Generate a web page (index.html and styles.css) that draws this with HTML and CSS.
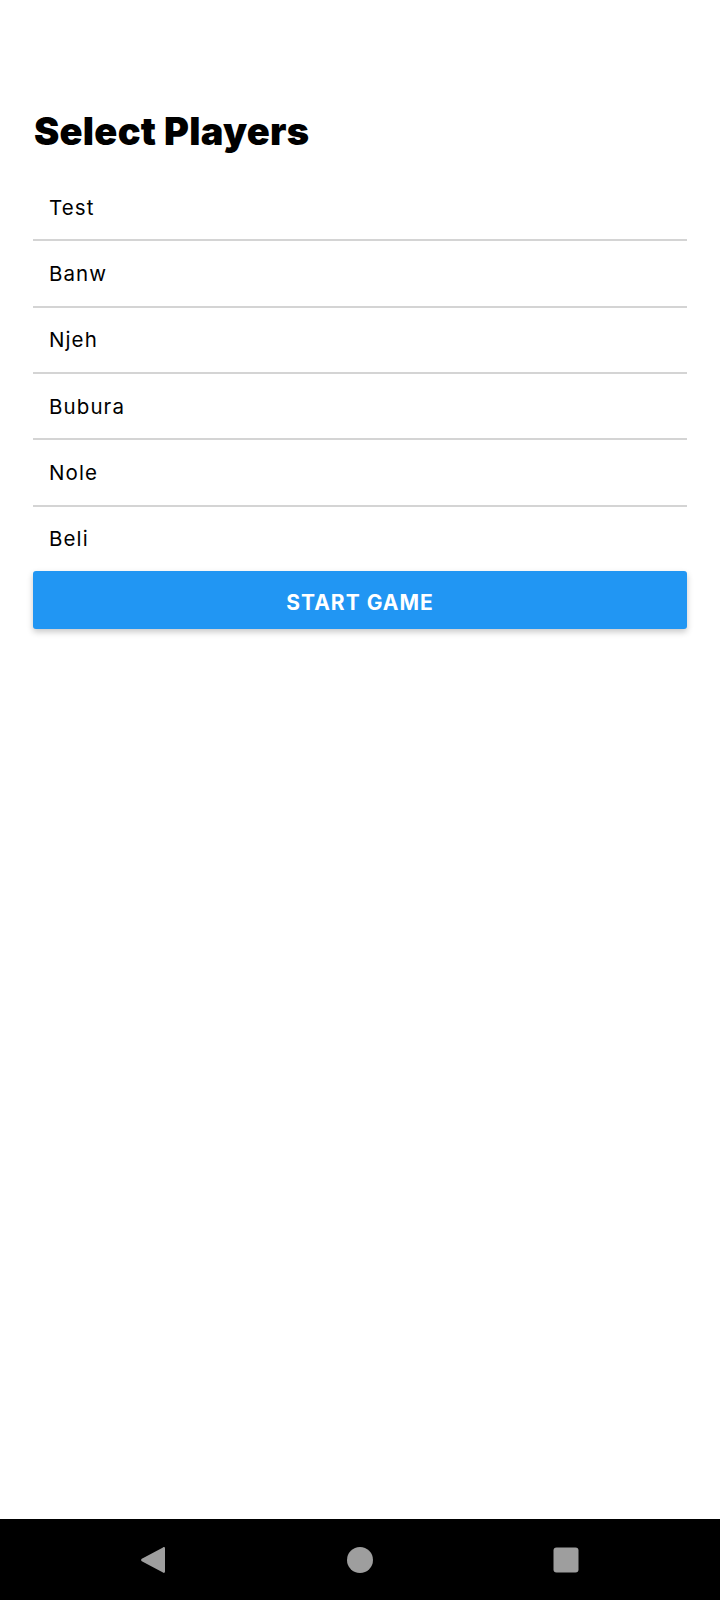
FILE: index.html
```html
<!DOCTYPE html>
<html lang="en">
<head>
<meta charset="utf-8">
<title>Select Players</title>
<link rel="stylesheet" href="styles.css">
</head>
<body>
<div class="screen">
  <main class="content">
    <h1 class="title">Select Players</h1>
    <ul class="players">
      <li class="player">Test</li>
      <li class="player">Banw</li>
      <li class="player">Njeh</li>
      <li class="player">Bubura</li>
      <li class="player">Nole</li>
      <li class="player">Beli</li>
    </ul>
    <button class="start">START GAME</button>
  </main>
  <nav class="navbar">
    <svg class="nav-icon" width="28" height="28" viewBox="0 0 28 28"><path d="M26 2.5v23c0 1.3-1.1 1.8-2 1.1L2.8 15.3c-.9-.7-.9-1.9 0-2.6L24 1.4c.9-.7 2-.2 2 1.1z" fill="#9e9e9e"/></svg>
    <svg class="nav-icon" width="28" height="28" viewBox="0 0 28 28"><circle cx="14" cy="14" r="13" fill="#9e9e9e"/></svg>
    <svg class="nav-icon" width="28" height="28" viewBox="0 0 28 28"><rect x="1.5" y="1.5" width="25" height="25" rx="3" fill="#9e9e9e"/></svg>
  </nav>
</div>
</body>
</html>
```
FILE: styles.css
```css
html, body {
  margin: 0;
  padding: 0;
  background: #ffffff;
}
.screen {
  width: 720px;
  height: 1600px;
  display: flex;
  flex-direction: column;
  font-family: "Inter", "Noto Sans", sans-serif;
  color: #000;
}
.content {
  flex: 1;
  padding: 108px 33px 0 33px;
}
.title {
  margin: 0 0 21px 1px;
  font-size: 38px;
  line-height: 46px;
  font-weight: 900;
  letter-spacing: 0.25px;
}
.players {
  list-style: none;
  margin: 0;
  padding: 0;
}
.player {
  height: 64.33px;
  display: flex;
  align-items: center;
  padding-left: 16px;
  font-size: 20.5px;
  letter-spacing: 1.1px;
  border-bottom: 2px solid #d4d4d4;
}
.player:last-child {
  border-bottom: none;
}
.start {
  display: block;
  width: 100%;
  height: 58px;
  padding: 5px 0 0 0;
  border: none;
  border-radius: 3px;
  background: #2196f3;
  color: #fff;
  font-family: "Inter", "Noto Sans", sans-serif;
  font-size: 21px;
  font-weight: 700;
  letter-spacing: 1px;
  box-shadow: 0 3px 6px rgba(0,0,0,0.22);
}
.navbar {
  height: 81px;
  background: #000;
  display: flex;
  justify-content: space-between;
  align-items: center;
  padding: 0 140px 0 139px;
}
```
